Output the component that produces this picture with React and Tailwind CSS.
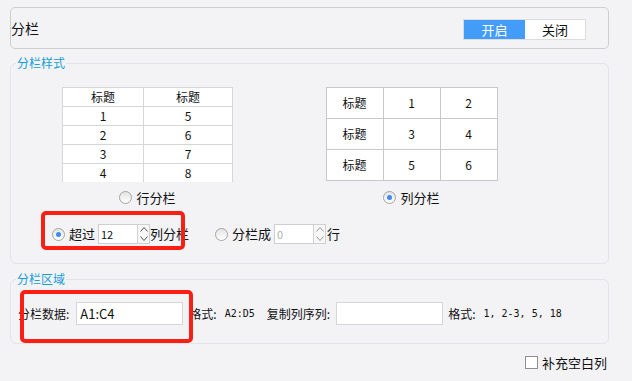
import React from 'react'

const Radio = ({ checked }) => (
  <span className="w-[13px] h-[13px] rounded-full border border-[#a3a3a3] bg-gradient-to-b from-[#e4e4e4] to-white flex items-center justify-center shrink-0">
    {checked && <span className="w-[5px] h-[5px] rounded-full bg-[#3a8cf2]"></span>}
  </span>
)

const Spin = ({ value, disabled }) => (
  <div className="flex h-[20px]">
    <div className={`w-[40px] h-full border border-[#cfcfcf] bg-white flex items-center pl-[2px] text-[11px] ${disabled ? 'text-[#b0b0b0]' : 'text-[#111]'}`}>{value}</div>
    <div className="w-[12px] h-full border border-l-0 border-[#cfcfcf] bg-[#f7f7f7] flex flex-col">
      <svg width="10" height="9" viewBox="0 0 10 9" className="mx-auto">
        <path d="M1.5 6.5 L5 2.5 L8.5 6.5" fill="none" stroke={disabled ? '#9a9a9a' : '#555'} strokeWidth="1" />
      </svg>
      <svg width="10" height="9" viewBox="0 0 10 9" className="mx-auto">
        <path d="M1.5 2.5 L5 6.5 L8.5 2.5" fill="none" stroke={disabled ? '#9a9a9a' : '#555'} strokeWidth="1" />
      </svg>
    </div>
  </div>
)

const leftRows = [['标题', '标题'], ['1', '5'], ['2', '6'], ['3', '7'], ['4', '8']]
const rightRows = [['标题', '1', '2'], ['标题', '3', '4'], ['标题', '5', '6']]

export default function App() {
  return (
    <div className="relative w-[632px] h-[381px] overflow-hidden bg-[#f3f3f6] pl-[10px] pr-[23px] pt-[7px] text-[13px] text-[#111] font-['Noto_Sans_CJK_SC','Liberation_Sans',sans-serif]">
      <div className="h-[42px] border border-[#cdcdcd] rounded-[5px] flex items-center justify-between pr-[22px]">
        <span className="text-[14px] leading-none">分栏</span>
        <div className="flex h-[21px] mt-[3px] border border-[#dcdcdc]">
          <div className="w-[61px] bg-[#439df8] text-white flex items-center justify-center">开启</div>
          <div className="w-[60px] bg-white flex items-center justify-center">关闭</div>
        </div>
      </div>

      <fieldset className="mt-[6px] border border-[#e3e3e8] rounded-[6px] pb-[19px]">
        <legend className="ml-[5px] px-[1px] text-[12px] leading-[16px] text-[#199bd9]">分栏样式</legend>
        <div className="flex mt-[16px]">
          <div className="ml-[51px] w-[171px] flex flex-col items-center">
            <div className="w-[171px] h-[95px] overflow-hidden border-l border-t border-[#d6d6d6] bg-white">
              {leftRows.map((r, i) => (
                <div key={i} className="flex h-[19px] border-b border-[#d6d6d6] text-[12px]">
                  <div className="w-[81px] border-r border-[#d6d6d6] flex items-center justify-center">{r[0]}</div>
                  <div className="w-[89px] border-r border-[#d6d6d6] flex items-center justify-center">{r[1]}</div>
                </div>
              ))}
            </div>
            <div className="flex items-center gap-[4px] mt-[8px] h-[15px]">
              <Radio />
              <span>行分栏</span>
            </div>
          </div>
          <div className="ml-[93px] w-[171px] flex flex-col items-center">
            <div className="w-[172px] border-l border-t border-[#c8c8c8] bg-white">
              {rightRows.map((r, i) => (
                <div key={i} className="flex h-[31px]">
                  {r.map((c, j) => (
                    <div key={j} className="w-[57px] border-r border-b border-[#c8c8c8] flex items-center justify-center text-[12px]">{c}</div>
                  ))}
                </div>
              ))}
            </div>
            <div className="flex items-center gap-[4px] mt-[9px] h-[15px]">
              <Radio checked />
              <span>列分栏</span>
            </div>
          </div>
        </div>
        <div className="flex items-center mt-[19px] pl-[41px]">
          <Radio checked />
          <span className="ml-[4px]">超过</span>
          <div className="ml-[3px]"><Spin value="12" /></div>
          <span>列分栏</span>
          <div className="ml-[26px]"><Radio /></div>
          <span className="ml-[4px]">分栏成</span>
          <div className="ml-[3px]"><Spin value="0" disabled /></div>
          <span className="ml-[1px]">行</span>
        </div>
      </fieldset>

      <fieldset className="mt-[7px] border border-[#e3e3e8] rounded-[6px] pb-[18px]">
        <legend className="ml-[5px] px-[1px] text-[12px] leading-[16px] text-[#199bd9]">分栏区域</legend>
        <div className="flex items-center mt-[15px] pl-[7px] text-[12px]">
          <span>分栏数据:</span>
          <div className="ml-[7px] w-[107px] h-[23px] border border-[#d6d6d6] bg-white flex items-center pl-[3px] text-[13px]">A1:C4</div>
          <span className="ml-[6px]">格式:</span>
          <span className="ml-[8px] text-[10px] font-['DejaVu_Sans_Mono',monospace]">A2:D5</span>
          <span className="ml-[12px]">复制列序列:</span>
          <div className="ml-[6px] w-[107px] h-[23px] border border-[#d6d6d6] bg-white"></div>
          <span className="ml-[5px]">格式:</span>
          <span className="ml-[8px] text-[10px] font-['DejaVu_Sans_Mono',monospace]">1, 2-3, 5, 18</span>
        </div>
      </fieldset>

      <div className="flex justify-end items-center mt-[9px] pr-[2px]">
        <span className="w-[13px] h-[13px] border border-[#8f8f8f] bg-white"></span>
        <span className="ml-[4px]">补充空白列</span>
      </div>

      <div className="absolute left-[41px] top-[211px] w-[144px] h-[39px] border-[4px] border-[#fa1f14] rounded-[5px]"></div>
      <div className="absolute left-[20px] top-[290px] w-[173px] h-[53px] border-[4px] border-[#fa1f14] rounded-[5px]"></div>
    </div>
  )
}
